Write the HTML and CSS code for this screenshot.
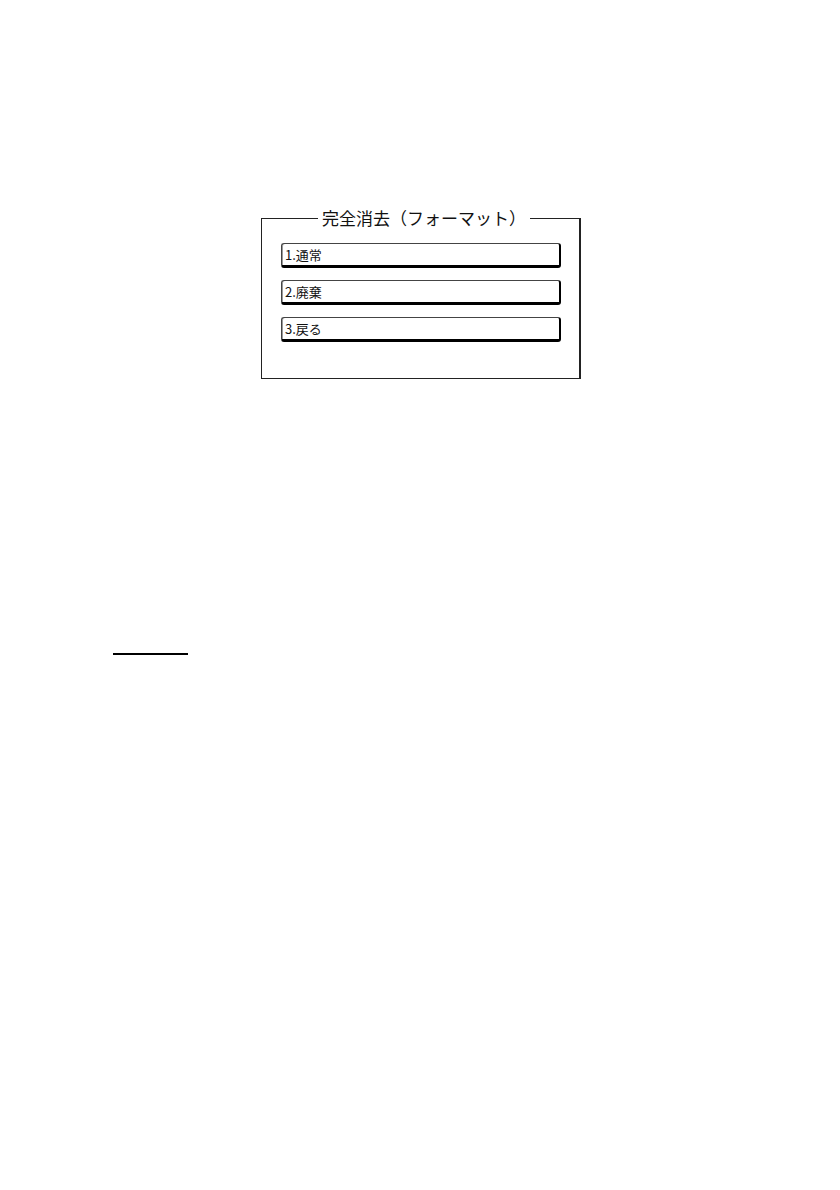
FILE: index.html
```html
<!DOCTYPE html>
<html lang="ja">
<head>
<meta charset="utf-8">
<link rel="stylesheet" href="styles.css">
</head>
<body>
<div class="page">
  <fieldset class="frame">
    <legend class="title">完全消去（フォーマット）</legend>
    <div class="menu">
      <div class="btn">1.通常</div>
      <div class="btn">2.廃棄</div>
      <div class="btn">3.戻る</div>
    </div>
  </fieldset>
  <div class="rule"></div>
</div>
</body>
</html>
```

FILE: styles.css
```css
html, body {
  margin: 0;
  padding: 0;
  background: #fff;
}
body {
  font-family: "Noto Sans CJK JP", "Liberation Sans", sans-serif;
  color: #111;
}
.page {
  width: 840px;
  height: 1190px;
  padding-top: 206px;
  box-sizing: border-box;
}
.frame {
  margin: 0 0 0 261px;
  padding: 0 18px 0 19px;
  width: 320px;
  height: 173px;
  box-sizing: border-box;
  border: 1px solid #222;
  border-right-width: 2px;
  min-width: 0;
}
.title {
  margin-left: 37px;
  padding: 0 4px;
  font-size: 17px;
  line-height: 24px;
  height: 24px;
  letter-spacing: 0;
}
.menu {
  display: flex;
  flex-direction: column;
  gap: 12px;
  padding-top: 13px;
}
.btn {
  height: 25px;
  box-sizing: border-box;
  border: 1px solid #444;
  border-right: 2px solid #000;
  border-bottom: 3px solid #000;
  border-radius: 3px;
  font-size: 13px;
  line-height: 21px;
  padding-left: 3px;
  box-shadow: inset 1px 0 0 #999;
}
.rule {
  margin: 274px 0 0 113px;
  width: 75px;
  height: 0;
  border-top: 2px solid #000;
}
```
